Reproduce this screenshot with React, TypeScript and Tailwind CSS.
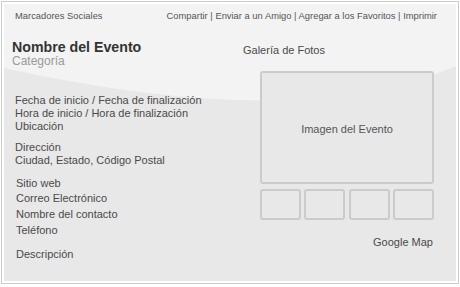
import React from "react";

const headerLinks = ["Compartir", "Enviar a un Amigo", "Agregar a los Favoritos", "Imprimir"];

const Swoosh = () => (
	<svg
		className="absolute inset-0 h-full w-full"
		viewBox="0 0 452 277"
		preserveAspectRatio="none"
	>
		<rect width="452" height="277" fill="#e8e8e8" />
		<path d="M0 0 H452 V62 Q300 130 0 64 Z" fill="#f3f3f3" />
	</svg>
);

const EventCard = () => {
	return (
		<div className="m-px h-[283px] w-[458px] border border-[#cccccc] bg-white p-[2px]">
			<div className="relative h-full w-full overflow-hidden">
				<Swoosh />
				<div className="relative flex h-full flex-col">
					<div className="flex justify-between pl-[11px] pr-[19px] pt-[6px] text-[9.4px] leading-[11px] text-[#555]">
						<span>Marcadores Sociales</span>
						<span>{headerLinks.join(" | ")}</span>
					</div>

					<div className="flex items-start">
						<div className="mt-[19px] w-[239px] pl-[8px]">
							<h1 className="text-[14.2px] font-bold leading-[15px] text-[#333]">Nombre del Evento</h1>
							<p className="text-[12px] leading-[13px] text-[#9a9a9a]">Categoría</p>

							<div className="ml-[3px] text-[11px] text-[#4a4a4a]">
								<div className="mt-[26px] leading-[13px]">
									<p>Fecha de inicio / Fecha de finalización</p>
									<p>Hora de inicio / Hora de finalización</p>
									<p>Ubicación</p>
								</div>
								<div className="mt-[8px] leading-[13px]">
									<p>Dirección</p>
									<p>Ciudad, Estado, Código Postal</p>
								</div>
								<div className="ml-px mt-[8.6px] leading-[15.7px]">
									<p>Sitio web</p>
									<p>Correo Electrónico</p>
									<p>Nombre del contacto</p>
									<p>Teléfono</p>
								</div>
								<p className="ml-px mt-[9.6px] leading-[13px]">Descripción</p>
							</div>
						</div>

						<div className="mt-[23px] flex flex-col text-[11px] leading-[13px] text-[#4a4a4a]">
							<p>Galería de Fotos</p>
							<div className="ml-[17px] mt-[14px] w-[174px]">
								<div className="flex h-[113px] items-center justify-center rounded-[3px] border-2 border-[#cbcbcb] bg-[#e8e8e8] pt-[3px] text-[#555]">
									Imagen del Evento
								</div>
								<div className="mt-[5px] grid grid-cols-4 gap-[3.3px]">
									{[0, 1, 2, 3].map((i) => (
										<div key={i} className="h-[31px] rounded-[3px] border-2 border-[#cbcbcb] bg-[#e8e8e8]" />
									))}
								</div>
								<p className="mt-[15.7px] pr-px text-right">Google Map</p>
							</div>
						</div>
					</div>
				</div>
			</div>
		</div>
	);
};

export default function App() {
	return (
		<div className="h-[287px] w-[460px] overflow-hidden bg-white font-['Liberation_Sans',Arial,sans-serif]">
			<EventCard />
		</div>
	);
}
